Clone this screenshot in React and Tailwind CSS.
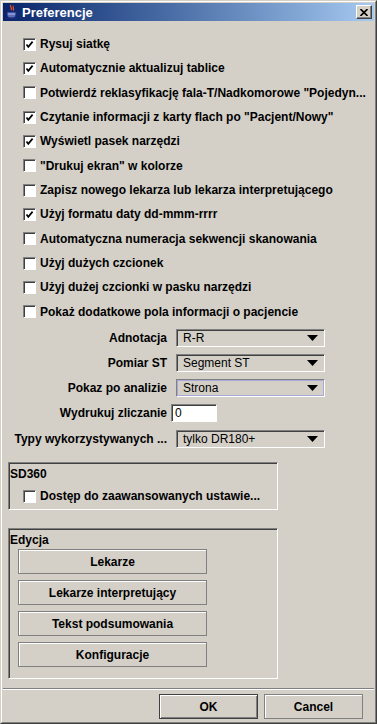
import React from 'react';

const options = [
  ['Rysuj siatkę', true],
  ['Automatycznie aktualizuj tablice', true],
  ['Potwierdź reklasyfikację fala-T/Nadkomorowe "Pojedyn...', false],
  ['Czytanie informacji z karty flach po "Pacjent/Nowy"', true],
  ['Wyświetl pasek narzędzi', true],
  ['"Drukuj ekran" w kolorze', false],
  ['Zapisz nowego lekarza lub lekarza interpretującego', false],
  ['Użyj formatu daty dd-mmm-rrrr', true],
  ['Automatyczna numeracja sekwencji skanowania', false],
  ['Użyj dużych czcionek', false],
  ['Użyj dużej czcionki w pasku narzędzi', false],
  ['Pokaż dodatkowe pola informacji o pacjencie', false],
];

const combos = [
  ['Adnotacja', 'R-R'],
  ['Pomiar ST', 'Segment ST'],
  ['Pokaz po analizie', 'Strona', true],
];

function CheckBox({ checked }) {
  return (
    <span className="w-[13px] h-[13px] shrink-0 bg-white border border-t-[#808080] border-l-[#808080] border-b-white border-r-white shadow-[inset_1px_1px_0_#404040] flex items-center justify-center">
      {checked && (
        <svg width="9" height="9" viewBox="0 0 9 9">
          <polyline points="1.5,4.5 3.3,6.8 7.6,1.6" fill="none" stroke="#000" strokeWidth="1.7" />
        </svg>
      )}
    </span>
  );
}

function Option({ label, checked }) {
  return (
    <div className="h-[24.33px] flex items-center pl-[20px] gap-[4px]">
      <CheckBox checked={checked} />
      <span className="font-bold text-[12px] leading-none whitespace-nowrap">{label}</span>
    </div>
  );
}

function Combo({ value, focused }) {
  return (
    <div className="ml-[9px] w-[149px] h-[18px] border border-t-[#808080] border-l-[#808080] border-b-white border-r-white shadow-[inset_1px_1px_0_#404040] flex items-center">
      <div className={`flex-1 h-full flex items-center pl-[6px] pr-[6px] ${focused ? 'shadow-[inset_0_0_0_1px_#a8a8dc]' : ''}`}>
        <span className="flex-1 text-[12px] leading-none">{value}</span>
        <svg width="11" height="6" viewBox="0 0 11 6">
          <polygon points="0,0 11,0 5.5,6" fill="#000" />
        </svg>
      </div>
    </div>
  );
}

function FormRow({ label, children }) {
  return (
    <div className="h-[25.25px] flex items-center">
      <div className="w-[164px] text-right font-bold text-[12px] leading-none whitespace-nowrap">{label}</div>
      {children}
    </div>
  );
}

function PanelButton({ children }) {
  return (
    <div className="w-[189px] h-[25px] border border-[#808080] shadow-[inset_1px_1px_0_#fff] flex items-center justify-center font-bold text-[12px] leading-none">
      {children}
    </div>
  );
}

function JavaCup() {
  return (
    <svg width="16" height="16" viewBox="0 0 16 16">
      <path d="M7 1 C5 3 9 4 7 6 M9.5 2 C8 3.5 11 4.5 9 6.5" fill="none" stroke="#e8502a" strokeWidth="1.3" />
      <path d="M3 8 H12 V11 C12 13 10 14 7.5 14 C5 14 3 13 3 11 Z" fill="#5a6fb8" stroke="#1c2c78" strokeWidth="0.8" />
      <path d="M12 9 C14.5 9 14.5 12 11.5 12" fill="none" stroke="#1c2c78" strokeWidth="1" />
      <path d="M1.5 14.5 H13.5" stroke="#1c2c78" strokeWidth="1.2" />
      <path d="M4 10 H11" stroke="#c8d0f0" strokeWidth="0.8" />
    </svg>
  );
}

export default function App() {
  return (
    <div className="w-[377px] h-[724px] border border-t-[#d4d0c8] border-l-[#d4d0c8] border-b-[#404040] border-r-[#404040] bg-[#d4d0c8] font-['Liberation_Sans',Arial,sans-serif] text-black">
      <div className="h-full border border-t-white border-l-white border-b-[#808080] border-r-[#808080] p-[1px] flex flex-col">
        <div className="h-[18px] shrink-0 flex items-center bg-gradient-to-r from-[#0a246a] to-[#a6caf0] pl-[1px] pr-[2px]">
          <JavaCup />
          <span className="ml-[2px] flex-1 text-white font-bold text-[13px] leading-none">Preferencje</span>
          <div className="w-[16px] h-[14px] bg-[#d4d0c8] border border-t-white border-l-white border-b-[#404040] border-r-[#404040] shadow-[inset_-1px_-1px_0_#808080] flex items-center justify-center">
            <svg width="8" height="7" viewBox="0 0 8 7">
              <path d="M0.5 0 L7.5 7 M7.5 0 L0.5 7" stroke="#000" strokeWidth="1.6" />
            </svg>
          </div>
        </div>

        <div className="flex-1 pt-[11px]">
          {options.map(([label, checked]) => (
            <Option key={label} label={label} checked={checked} />
          ))}

          <div className="mt-[1px]">
            {combos.map(([label, value, focused]) => (
              <FormRow key={label} label={label}>
                <Combo value={value} focused={focused} />
              </FormRow>
            ))}
            <FormRow label="Wydrukuj zliczanie">
              <div className="ml-[4px] w-[46px] h-[18px] bg-white border border-t-[#808080] border-l-[#808080] border-b-white border-r-white shadow-[inset_1px_1px_0_#404040] flex items-center pl-[3px] text-[12px] leading-none">
                0
              </div>
            </FormRow>
            <FormRow label="Typy wykorzystywanych ...">
              <Combo value="tylko DR180+" />
            </FormRow>
          </div>

          <div className="ml-[5px] mt-[11px] w-[270px] h-[48px] border border-t-[#808080] border-l-[#808080] border-b-white border-r-white shadow-[inset_1px_1px_0_#404040] flex flex-col">
            <div className="pl-[1px] pt-[5px] h-[21px] font-bold text-[12px] leading-none">SD360</div>
            <div className="h-[24px] flex items-center pl-[14px] gap-[4px]">
              <CheckBox checked={false} />
              <span className="font-bold text-[12px] leading-none whitespace-nowrap">Dostęp do zaawansowanych ustawie...</span>
            </div>
          </div>

          <div className="ml-[5px] mt-[18px] w-[270px] h-[151px] border border-t-[#808080] border-l-[#808080] border-b-white border-r-white shadow-[inset_1px_1px_0_#404040] flex flex-col">
            <div className="pl-[1px] pt-[5px] h-[20px] font-bold text-[12px] leading-none">Edycja</div>
            <div className="pl-[9px] flex flex-col gap-[6px]">
              <PanelButton>Lekarze</PanelButton>
              <PanelButton>Lekarze interpretujący</PanelButton>
              <PanelButton>Tekst podsumowania</PanelButton>
              <PanelButton>Konfiguracje</PanelButton>
            </div>
          </div>
        </div>

        <div className="h-[2px] shrink-0 border-t border-t-[#808080] border-b border-b-white" />
        <div className="shrink-0 flex justify-end gap-[6px] pt-[4px] pb-[2px] pr-[11px]">
          <div className="w-[99px] h-[25px] border border-[#404040] shadow-[inset_1px_1px_0_#fff,inset_-1px_-1px_0_#808080] flex items-center justify-center font-bold text-[12px] leading-none">
            OK
          </div>
          <div className="w-[99px] h-[25px] border border-[#808080] shadow-[inset_1px_1px_0_#fff] flex items-center justify-center font-bold text-[12px] leading-none">
            Cancel
          </div>
        </div>
      </div>
    </div>
  );
}
